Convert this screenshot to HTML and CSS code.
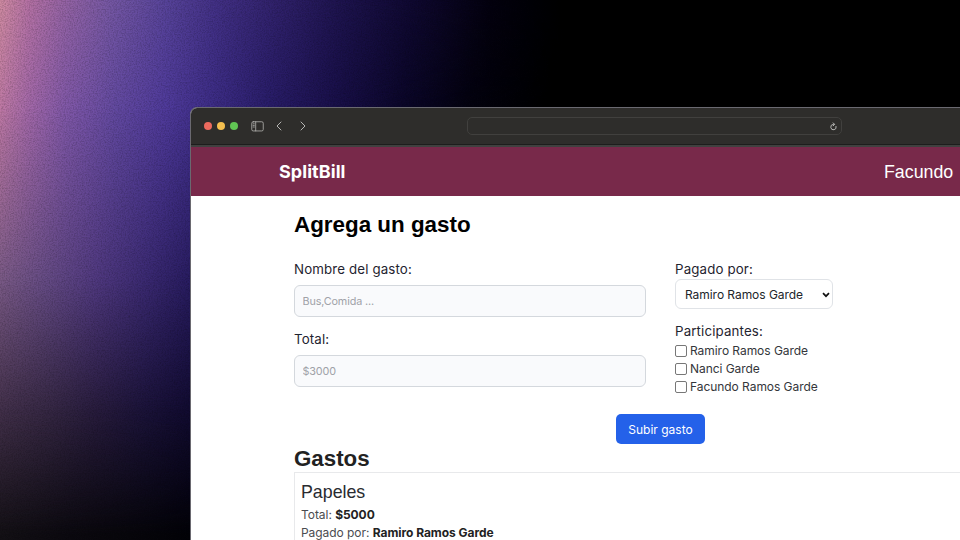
FILE: index.html
```
<!DOCTYPE html>
<html lang="es">
<head>
<meta charset="utf-8">
<title>SplitBill</title>
<link rel="stylesheet" href="styles.css">
</head>
<body>
<div class="backdrop">
  <div class="glow glow-top"></div>
  <div class="glow glow-upper"></div>
  <div class="glow glow-middle"></div>
  <div class="glow glow-lower"></div>
  <div class="glow glow-bottom"></div>
  <svg class="grain" width="960" height="540" aria-hidden="true">
    <filter id="noise"><feTurbulence type="fractalNoise" baseFrequency="0.75" numOctaves="2" seed="4"/><feColorMatrix type="matrix" values="0 0 0 0 0  0 0 0 0 0  0 0 0 0 0  1.6 0 0 0 -0.6"/></filter>
    <rect width="960" height="540" filter="url(#noise)"/>
  </svg>
</div>
<div class="browser">
  <div class="toolbar">
    <div class="lights"><i class="light red"></i><i class="light yellow"></i><i class="light green"></i></div>
    <svg class="sidebar-icon" width="13" height="11" viewBox="0 0 13 11"><rect x=".75" y=".75" width="11.5" height="9.2" rx="1.5"/><path d="M4.7 .8v9.1M2.1 2.8h1.2M2.1 4.4h1.2M2.1 6h1.2"/></svg>
    <svg class="chevron back" width="8" height="10" viewBox="0 0 8 10"><path d="M6 1 2 5l4 4"/></svg>
    <svg class="chevron forward" width="8" height="10" viewBox="0 0 8 10"><path d="m2 1 4 4-4 4"/></svg>
    <div class="address"><svg width="9" height="9" viewBox="0 0 9 9"><path d="M7.1 4.4A2.7 2.7 0 1 1 4.2 2.4h1.1M4.2 .9l1.4 1.5-1.4 1.4"/></svg></div>
  </div>
  <header class="navbar"><span class="brand">SplitBill</span><span class="user">Facundo</span></header>
  <main>
    <h1>Agrega un gasto</h1>
    <form>
      <div class="fields">
        <label for="name">Nombre del gasto:</label>
        <input class="field" id="name" type="text" placeholder="Bus,Comida ...">
        <label for="total">Total:</label>
        <input class="field" id="total" type="text" placeholder="$3000">
      </div>
      <div class="people">
        <label for="payer">Pagado por:</label>
        <div class="select-wrap">
          <select id="payer"><option>Ramiro Ramos Garde</option></select>
          <svg width="8" height="6" viewBox="0 0 8 6"><path d="m1 1.2 3 3 3-3"/></svg>
        </div>
        <div class="group">Participantes:</div>
        <label class="person"><input type="checkbox">Ramiro Ramos Garde</label>
        <label class="person"><input type="checkbox">Nanci Garde</label>
        <label class="person"><input type="checkbox">Facundo Ramos Garde</label>
      </div>
      <button type="button">Subir gasto</button>
    </form>
    <h2>Gastos</h2>
    <article class="expense">
      <h3>Papeles</h3>
      <p>Total: <b>$5000</b></p>
      <p>Pagado por: <b>Ramiro Ramos Garde</b></p>
    </article>
  </main>
</div>
</body>
</html>
```
FILE: styles.css
```
* { box-sizing: border-box; }
body { margin: 0; width: 960px; height: 540px; overflow: hidden; background: #000; font-family: Inter, "Liberation Sans", sans-serif; color: #1f2430; padding: 107px 0 0 190px; }
.backdrop, .glow, .grain { position: absolute; inset: 0; }
.backdrop { overflow: hidden; z-index: -1; }
.glow-top { background: linear-gradient(90deg, #cf8ba2 0, #b572a4 28px, #9865a4 60px, #7658a4 110px, #58449a 165px, #433186 215px, #31226c 275px, #1e144f 340px, #100932 410px, #04020f 490px, #000 570px); }
.glow-upper { background: linear-gradient(90deg, #bd78a4 0, #a067a8 30px, #8058a8 65px, #6249a0 115px, #4f3a9a 165px, #3d2d87 210px, #291d6a 265px, #180f48 335px, #0a0627 405px, #03020e 470px, #000 550px); mask-image: linear-gradient(transparent, #000 115px); }
.glow-middle { background: linear-gradient(90deg, #7a5a86 0, #654b84 45px, #50397f 95px, #3b2a72 145px, #281c60 190px, #000 400px); mask-image: linear-gradient(transparent 110px, #000 280px); }
.glow-lower { background: linear-gradient(90deg, #42304a 0, #352743 50px, #281c3d 95px, #1b1339 145px, #110b30 190px, #000 400px); mask-image: linear-gradient(transparent 280px, #000 410px); }
.glow-bottom { background: linear-gradient(90deg, #131015 0, #0b090f 70px, #07060b 130px, #020207 190px, #000 400px); mask-image: linear-gradient(transparent 410px, #000 535px); }
.grain { opacity: .25; }
.browser { width: 770px; height: 433px; border: 1px solid #6a6970; border-width: 1px 0 0 1px; border-radius: 7px 0 0 0; background: #fff; overflow: hidden; }
.toolbar { height: 39px; background: #2e2d2b; border-bottom: 2px solid #40403f; box-shadow: inset 0 -1px #1d1d1c; display: flex; align-items: center; padding: 0 0 1px 13px; }
.lights { display: flex; gap: 5px; margin-right: 13px; }
.light { width: 8px; height: 8px; border-radius: 50%; }
.red { background: #ec6a5e; } .yellow { background: #f4bf4f; } .green { background: #61c554; }
.toolbar svg { flex: none; fill: none; stroke: #b5b5b3; stroke-width: 1; stroke-linecap: round; stroke-linejoin: round; }
.toolbar .sidebar-icon { stroke-width: .8; }
.back { margin-left: 11px; } .forward { margin-left: 16px; }
.address { flex: none; width: 375px; height: 18px; margin-left: 160px; border: 1px solid #41403e; border-radius: 5px; display: flex; justify-content: flex-end; align-items: center; padding-right: 3px; }
.navbar { height: 49px; background: #78294a; color: #fff; display: flex; align-items: center; font-size: 18px; padding-left: 88px; }
.brand { width: 605px; font-weight: 700; letter-spacing: .05px; font-size: 18px; }
.user { font-family: "Liberation Sans", sans-serif; font-size: 17.8px; padding-top: 2px; }
main { height: 344px; overflow: hidden; padding: 15px 0 0 103px; }
h1, h2, h3, p { margin: 0; }
h1 { font: 700 22.4px/28px "Liberation Sans", sans-serif; color: #000; }
form { display: grid; grid-template-columns: 352px 1fr; column-gap: 29px; padding-top: 20px; }
.fields label, .people > label, .group { display: block; font-size: 13.3px; letter-spacing: .14px; line-height: 20px; }
.field { display: block; width: 352px; height: 32px; margin: 6px 0 12px; padding: 0 7.5px; border: 1px solid #d4d8dd; border-radius: 6px; background: #f9fafc; font: 10.8px Inter, sans-serif; letter-spacing: -.13px; }
.field::placeholder { color: #a0a2a8; opacity: 1; }
.select-wrap { position: relative; width: 158px; margin-bottom: 12px; }
select { display: block; appearance: none; width: 158px; height: 30px; border: 1px solid #e0e3e7; border-radius: 6px; background: #fff; color: #22252b; padding: 0 9px; font: 12px Inter, sans-serif; letter-spacing: -.05px; }
.select-wrap svg { position: absolute; right: 3px; top: 13px; fill: none; stroke: #111; stroke-width: 1.7; }
.group { margin-bottom: 1px; }
.people > .person { display: flex; align-items: center; height: 18px; font-size: 12px; letter-spacing: -.05px; color: #34363b; }
.person input { appearance: none; width: 12px; height: 12px; margin: 0 3px 0 0; border: 1px solid #777; border-radius: 2px; background: #fff; }
button { grid-column: 1 / -1; justify-self: start; margin: 15px 0 0 322px; width: 89px; height: 30px; border: 0; border-radius: 5px; background: #2461e9; color: #fff; font: 12px Inter, sans-serif; padding: 0; }
h2 { font: 700 22.3px/28px "Liberation Sans", sans-serif; color: #222; padding-top: 1px; margin-bottom: -1px; }
.expense { border: 1px solid #e8e9eb; border-right: 0; padding: 6px 6px; height: 100px; }
h3 { font: 400 17.8px/26px "Liberation Sans", sans-serif; color: #292b30; margin-bottom: 1px; }
p { font-size: 12px; line-height: 18px; color: #4a4c50; letter-spacing: -.05px; }
p b { color: #222; }
```
